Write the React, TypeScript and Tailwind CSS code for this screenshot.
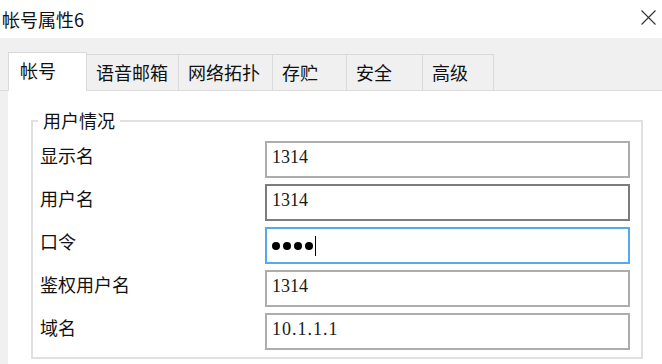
import React from 'react';

const cjk = "font-['Microsoft_YaHei','Noto_Sans_CJK_SC',sans-serif]";

const tabs = [
  { label: '帐号', w: 'w-[79px]', active: true },
  { label: '语音邮箱', w: 'w-[91px]' },
  { label: '网络拓扑', w: 'w-[94px]' },
  { label: '存贮', w: 'w-[74px]' },
  { label: '安全', w: 'w-[76px]' },
  { label: '高级', w: 'w-[72px]' },
];

function Field({ value, border, wide }: { value: string; border: string; wide?: boolean }) {
  return (
    <div className={`w-[365px] h-[37px] border-2 bg-white pl-[5px] pt-[4px] ${border}`}>
      <div
        className={`font-['Liberation_Serif',serif] text-[18px] leading-[20px] text-[#1a1a1a] ${
          wide ? 'tracking-[1px]' : ''
        }`}
      >
        {value}
      </div>
    </div>
  );
}

function PasswordField() {
  return (
    <div className="w-[365px] h-[37px] border-2 border-[#59a8ea] bg-white pl-[5px] flex items-center">
      <div className="flex gap-[3px]">
        {[0, 1, 2, 3].map((i) => (
          <span key={i} className="w-[8px] h-[8px] rounded-full bg-black" />
        ))}
      </div>
      <span className="ml-[2px] w-px h-[20px] bg-black" />
    </div>
  );
}

export default function App() {
  const rows = [
    { label: '显示名', field: <Field value="1314" border="border-[#adadad]" /> },
    { label: '用户名', field: <Field value="1314" border="border-[#7c7c7c]" /> },
    { label: '口令', field: <PasswordField /> },
    { label: '鉴权用户名', field: <Field value="1314" border="border-[#adadad]" /> },
    { label: '域名', field: <Field value="10.1.1.1" border="border-[#adadad]" wide /> },
  ];

  return (
    <div className={`w-[662px] h-[364px] overflow-hidden bg-white flex flex-col ${cjk} text-[18px] text-[#111]`}>
      {/* title bar */}
      <div className="h-[38px] flex justify-between pl-[2px] pr-[6px] shrink-0">
        <div className="leading-[24px] self-center">帐号属性6</div>
        <svg width="15" height="15" viewBox="0 0 15 15" className="mt-[10px]">
          <path d="M0.5 0.5 L14.5 14.5 M14.5 0.5 L0.5 14.5" stroke="#333" strokeWidth="1.1" fill="none" />
        </svg>
      </div>

      {/* tab strip */}
      <div className="h-[53px] shrink-0 bg-[#f0f0f0] flex items-end pl-[8px] border-b border-[#dcdcdc]">
        {tabs.map((t, i) =>
          t.active ? (
            <div
              key={t.label}
              className={`${t.w} h-[39px] mb-[-1px] bg-white border border-b-0 border-[#d9d9d9] pl-[11px] pt-[5px] leading-[24px]`}
            >
              {t.label}
            </div>
          ) : (
            <div
              key={t.label}
              className={`${t.w} h-[36px] border-t border-[#d9d9d9] ${i > 1 ? 'border-l' : ''} ${
                i === tabs.length - 1 ? 'border-r' : ''
              } pl-[9px] pt-[5px] leading-[24px]`}
            >
              {t.label}
            </div>
          )
        )}
      </div>

      {/* page */}
      <div className="flex-1 flex">
        <div className="w-[8px] bg-[#f0f0f0]" />
        <div className="flex-1 bg-white pt-[29px] pl-[23px]">
          <div className="relative w-[612px] h-[239px] border-2 border-[#e0e0e0] pt-[19px]">
            <div className="absolute left-[5px] top-[-14px] bg-white px-[5px] leading-[24px]">用户情况</div>
            <div className="flex flex-col gap-[6px]">
              {rows.map((r) => (
                <div key={r.label} className="h-[37px] flex">
                  <div className="w-[232px] pl-[7px] pt-[2px] leading-[24px]">{r.label}</div>
                  {r.field}
                </div>
              ))}
            </div>
          </div>
        </div>
      </div>
    </div>
  );
}
